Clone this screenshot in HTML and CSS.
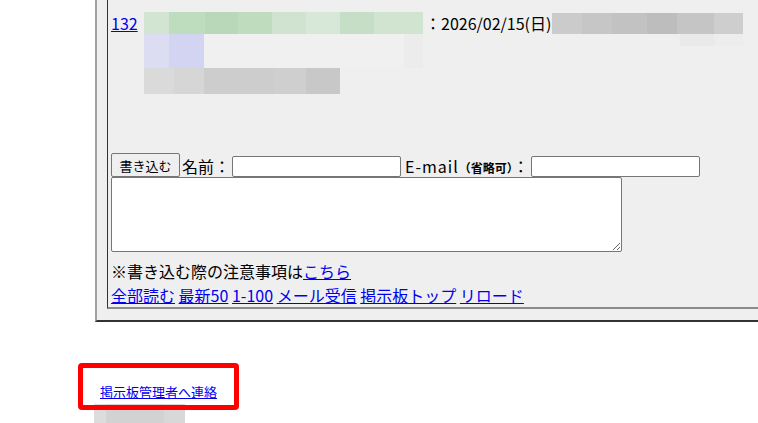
FILE: index.html
```html
<!DOCTYPE html>
<html lang="ja">
  <head>
    <meta charset="UTF-8" />
    <meta name="viewport" content="width=device-width, initial-scale=1.0" />
    <title>掲示板</title>
    <link rel="stylesheet" href="styles.css">
  </head>
  <body>
    <div class="thread">
      <div class="thread-inner">
        <div class="post">
          <a class="post-num" href="#">132</a>
          <div class="post-name">
            <div class="mosaic name-a"></div>
            <div class="mosaic name-b"></div>
            <div class="mosaic name-c"></div>
          </div>
          <span class="post-date">：2026/02/15(日)</span>
          <div class="post-id">
            <div class="mosaic id-a"></div>
            <div class="mosaic id-b"></div>
          </div>
        </div>

        <form class="reply-form" onsubmit="return false;">
          <div class="form-row">
            <button type="submit" class="write-btn">書き込む</button>
            <label for="name">名前：</label>
            <input type="text" id="name" name="name" class="field" />
            <label for="mail" class="mail-label"><span class="mail-word">E-mail</span><small>（省略可）</small>：</label>
            <input type="text" id="mail" name="mail" class="field" />
          </div>
          <textarea name="body" class="body-field"></textarea>
        </form>

        <p class="notice">※書き込む際の注意事項は<a href="#">こちら</a></p>
        <p class="nav-links">
          <a href="#">全部読む</a>
          <a href="#">最新50</a>
          <a href="#">1-100</a>
          <a href="#">メール受信</a>
          <a href="#">掲示板トップ</a>
          <a href="#">リロード</a>
        </p>
      </div>
    </div>

    <div class="footer">
      <a href="#" class="contact-link">掲示板管理者へ連絡</a>
      <div class="mosaic footer-block"></div>
      <div class="highlight"></div>
    </div>
  </body>
</html>
```

FILE: styles.css
```css
html,
body {
  overflow: hidden;
}
body {
  margin: 0;
  background: #fff;
  color: #000;
  font-family: "Noto Sans CJK JP", "Noto Sans", sans-serif;
  font-size: 16px;
}
a {
  color: #0000ee;
}
.thread {
  margin-left: 95px;
  background-color: #efefef;
  border-left: 2px solid #a0a0a0;
  border-bottom: 2px solid #333;
  padding-bottom: 11px;
}
.thread-inner {
  margin-left: 10px;
  border-left: 1px solid #333;
  border-bottom: 2px solid #8a8a8a;
  padding: 12px 0 0 3px;
}

/* post */
.post {
  display: flex;
  align-items: flex-start;
}
.post-num {
  width: 33px;
  line-height: 22px;
}
.post-name {
  width: 279px;
}
.post-date {
  line-height: 22px;
  margin-left: 2px;
}
.post-id {
  margin-left: 1px;
  margin-top: 1px;
}
.mosaic {
  display: block;
}
.name-a {
  height: 22px;
  background: linear-gradient(to right,
    #d2e4d2 0 25px, #bedcbe 25px 61px, #b9d8b9 61px 94px,
    #bfdcbf 94px 128px, #d0e3d0 128px 162px, #d8e8d8 162px 196px,
    #c6ddc6 196px 230px, #d0e4d0 230px 279px);
}
.name-b {
  height: 34px;
  background: linear-gradient(to right,
    #dcdcf2 0 25px, #d3d3f2 25px 60px, #f0f0f0 60px 260px, #ececec 260px 279px);
}
.name-c {
  width: 196px;
  height: 26px;
  background: linear-gradient(to right,
    #dadada 0 30px, #d6d6d6 30px 60px, #cdcdcd 60px 130px,
    #cfcfcf 130px 162px, #c8c8c8 162px 196px);
}
.id-a {
  width: 191px;
  height: 21px;
  background: linear-gradient(to right,
    #cbcbcb 0 30px, #c6c6c6 30px 60px, #c2c2c2 60px 95px,
    #bdbdbd 95px 125px, #c5c5c5 125px 162px, #cecece 162px 191px);
}
.id-b {
  width: 191px;
  height: 12px;
  background: linear-gradient(to right,
    #efefef 0 128px, #e9e9e9 128px 162px, #ededed 162px 191px);
}

/* form */
.reply-form {
  margin-top: 59px;
}
.form-row {
  display: flex;
  align-items: flex-end;
  height: 24px;
}
.write-btn {
  width: 69px;
  height: 24px;
  padding: 0;
  font-family: inherit;
  font-size: 13px;
  background-color: #efefef;
  border: 1px solid #767676;
  border-radius: 2px;
  color: #000;
}
.form-row label {
  height: 21px;
  line-height: 21px;
  margin-left: 2px;
  margin-right: 2px;
}
.mail-label {
  margin-left: 4px !important;
}
.mail-word {
  letter-spacing: 1px;
}
.mail-label small {
  font-size: 12px;
  font-weight: bold;
}
.field {
  width: 169px;
  height: 21px;
  box-sizing: border-box;
  border: 1px solid #767676;
  border-radius: 2px;
  background: #fff;
  margin: 0;
}
.body-field {
  display: block;
  width: 511px;
  height: 75px;
  box-sizing: border-box;
  border: 1px solid #767676;
  border-radius: 2px;
  margin: 0 0 7px 0;
}
.notice,
.nav-links {
  margin: 0;
  height: 24px;
  line-height: 24px;
  overflow: hidden;
}

/* footer */
.footer {
  position: relative;
  margin-top: 56px;
  padding-left: 94px;
}
.contact-link {
  display: inline-block;
  margin-left: 6px;
  font-size: 13px;
  line-height: 18px;
  margin-bottom: 3px;
}
.footer-block {
  width: 91px;
  height: 30px;
  background: linear-gradient(to right,
    #dcdcdc 0 12px, #d2d2d2 12px 70px, #d8d8d8 70px 91px);
}
.highlight {
  position: absolute;
  left: 78px;
  top: -15px;
  width: 161px;
  height: 47px;
  box-sizing: border-box;
  border: 5px solid #ff0000;
  border-radius: 4px;
}
```
